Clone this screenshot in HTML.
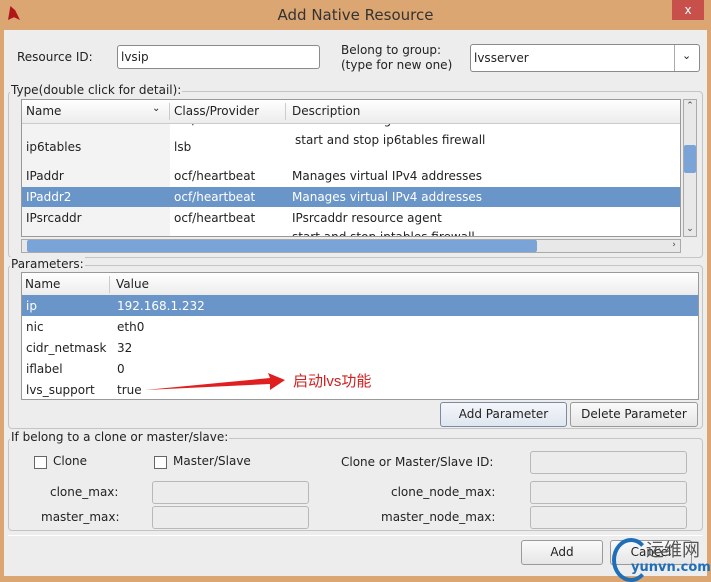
<!DOCTYPE html><html><head><style>
body{margin:0;width:711px;height:582px;background:#dca672;position:relative;overflow:hidden;font-family:"DejaVu Sans","Liberation Sans",sans-serif;font-size:12px;color:#222}
.a{position:absolute}
.body{left:4px;top:30px;width:703px;height:546px;background:#ededed}
.in{position:absolute;background:#fff;border:1px solid #8a8a8a;border-radius:3px;box-sizing:border-box}
.dis{position:absolute;background:#ececec;border:1px solid #b8b8b8;border-radius:3px;box-sizing:border-box}
.grp{position:absolute;border:1px solid #c4c4c4;border-radius:4px;box-sizing:border-box}
.gl{position:absolute;background:#ededed;padding:0 1px}
.btn{position:absolute;border:1px solid #9a9a9a;border-radius:3px;box-sizing:border-box;background:linear-gradient(#fafafa,#e6e6e6);text-align:center}
.sel{background:#6a95c8;color:#fff}
.cb{position:absolute;width:11px;height:11px;border:1px solid #666;background:#fff}
.ar{position:absolute;font-size:9px;color:#444;text-align:center;width:14px}
</style></head><body>
<div class="a" style="left:8px;top:6px;width:12px;height:14px;background:#b01818;clip-path:polygon(20% 0,60% 30%,100% 100%,50% 80%,0 100%)"></div>
<div class="a" style="left:0;top:6px;width:711px;text-align:center;font-size:15px;color:#333">Add Native Resource</div>
<div class="a" style="left:672px;top:0;width:32px;height:20px;background:#c7504a;color:#fff;text-align:center;line-height:20px;font-size:12px">x</div>
<div class="a body"></div>
<div class="a" style="left:17px;top:50px">Resource ID:</div>
<div class="in" style="left:117px;top:45px;width:203px;height:24px;padding:4px 3px">lvsip</div>
<div class="a" style="left:341px;top:43px;line-height:15px">Belong to group:<br>(type for new one)</div>
<div class="in" style="left:470px;top:44px;width:230px;height:28px;padding:6px 3px">lvsserver</div>
<div class="a" style="left:674px;top:45px;width:1px;height:26px;background:#aaa"></div>
<div class="a" style="left:682px;top:49px;font-size:11px">&#8964;</div>
<div class="grp" style="left:8px;top:91px;width:695px;height:167px"></div>
<div class="gl" style="left:10px;top:83px">Type(double click for detail):</div>
<div class="a" style="left:21px;top:99px;width:660px;height:138px;background:#fff;border:1px solid #999;box-sizing:border-box;overflow:hidden">
<div class="a" style="left:0;top:0;width:148px;height:138px;background:#f3f3f3"></div>
<div class="a" style="left:4px;top:13px">ids</div><div class="a" style="left:152px;top:13px">ocf/heartbeat</div><div class="a" style="left:270px;top:13px;white-space:nowrap">OCF resource agent for the IBM's database server called Infor</div>
<div class="a" style="left:270px;top:130px;white-space:nowrap">start and stop iptables firewall</div>
<div class="a" style="left:0;top:0;width:660px;height:23px;background:linear-gradient(#fff,#ececec);border-bottom:1px solid #ccc"></div>
<div class="a" style="left:4px;top:4px">Name</div><div class="a" style="left:130px;top:3px;font-size:10px">&#8964;</div>
<div class="a" style="left:147px;top:3px;width:1px;height:17px;background:#ccc"></div>
<div class="a" style="left:152px;top:4px">Class/Provider</div>
<div class="a" style="left:263px;top:3px;width:1px;height:17px;background:#ccc"></div>
<div class="a" style="left:270px;top:4px">Description</div>
<div class="a" style="left:0;top:23px;width:660px;height:7px;background:transparent"></div>
<div class="a" style="left:4px;top:40px">ip6tables</div><div class="a" style="left:152px;top:40px">lsb</div><div class="a" style="left:273px;top:33px">start and stop ip6tables firewall</div>
<div class="a" style="left:4px;top:69px">IPaddr</div><div class="a" style="left:152px;top:69px">ocf/heartbeat</div><div class="a" style="left:270px;top:69px">Manages virtual IPv4 addresses</div>
<div class="a sel" style="left:0;top:87px;width:660px;height:20px"></div>
<div class="a" style="left:4px;top:90px;color:#fff">IPaddr2</div><div class="a" style="left:152px;top:90px;color:#fff">ocf/heartbeat</div><div class="a" style="left:270px;top:90px;color:#fff">Manages virtual IPv4 addresses</div>
<div class="a" style="left:4px;top:111px">IPsrcaddr</div><div class="a" style="left:152px;top:111px">ocf/heartbeat</div><div class="a" style="left:270px;top:111px">IPsrcaddr resource agent</div>
</div>
<div class="a" style="left:683px;top:99px;width:14px;height:138px;background:#e8e8e8;border:1px solid #aaa;box-sizing:border-box"></div>
<div class="ar" style="left:683px;top:101px">&#8963;</div><div class="ar" style="left:683px;top:224px">&#8964;</div>
<div class="a" style="left:684px;top:145px;width:12px;height:28px;background:#7aa4d8;border-radius:2px"></div>
<div class="a" style="left:21px;top:239px;width:660px;height:14px;background:#e8e8e8;border:1px solid #aaa;box-sizing:border-box"></div>
<div class="a" style="left:27px;top:240px;width:510px;height:12px;background:#7aa4d8;border-radius:2px"></div>
<div class="ar" style="left:667px;top:240px">&#8250;</div>
<div class="grp" style="left:8px;top:265px;width:695px;height:164px"></div>
<div class="gl" style="left:10px;top:257px">Parameters:</div>
<div class="a" style="left:21px;top:272px;width:678px;height:128px;background:#fff;border:1px solid #999;box-sizing:border-box;overflow:hidden">
<div class="a" style="left:0;top:0;width:678px;height:22px;background:linear-gradient(#fff,#ececec);border-bottom:1px solid #ccc"></div>
<div class="a" style="left:3px;top:4px">Name</div><div class="a" style="left:87px;top:3px;width:1px;height:17px;background:#ccc"></div><div class="a" style="left:94px;top:4px">Value</div>
<div class="a sel" style="left:0;top:22px;width:678px;height:21px"></div>
<div class="a" style="left:4px;top:26px;color:#fff">ip</div><div class="a" style="left:95px;top:26px;color:#fff">192.168.1.232</div>
<div class="a" style="left:4px;top:47px">nic</div><div class="a" style="left:95px;top:47px">eth0</div>
<div class="a" style="left:4px;top:68px">cidr_netmask</div><div class="a" style="left:95px;top:68px">32</div>
<div class="a" style="left:4px;top:89px">iflabel</div><div class="a" style="left:95px;top:89px">0</div>
<div class="a" style="left:4px;top:110px">lvs_support</div><div class="a" style="left:95px;top:110px">true</div>
</div>
<svg class="a" style="left:145px;top:370px" width="145" height="24"><polygon points="0,20 125,8 123,3 140,10 125,20 125,14" fill="#e02020"/></svg>
<div class="a" style="left:293px;top:370px;color:#d02020;font-family:'Liberation Sans','Noto Sans CJK SC',sans-serif;font-size:15px">启动lvs功能</div>
<div class="btn" style="left:440px;top:402px;width:127px;height:25px;line-height:23px;border-color:#7a8aa0;background:linear-gradient(#f4f7fb,#dfe6ef)">Add Parameter</div>
<div class="btn" style="left:570px;top:402px;width:128px;height:25px;line-height:23px">Delete Parameter</div>
<div class="grp" style="left:8px;top:438px;width:695px;height:93px"></div>
<div class="gl" style="left:10px;top:430px">If belong to a clone or master/slave:</div>
<div class="cb" style="left:34px;top:456px"></div><div class="a" style="left:53px;top:454px">Clone</div>
<div class="cb" style="left:154px;top:456px"></div><div class="a" style="left:173px;top:454px">Master/Slave</div>
<div class="a" style="left:341px;top:455px">Clone or Master/Slave ID:</div>
<div class="dis" style="left:530px;top:451px;width:157px;height:23px"></div>
<div class="a" style="left:50px;top:485px">clone_max:</div>
<div class="dis" style="left:152px;top:481px;width:157px;height:23px"></div>
<div class="a" style="left:41px;top:510px">master_max:</div>
<div class="dis" style="left:152px;top:506px;width:157px;height:23px"></div>
<div class="a" style="left:391px;top:485px">clone_node_max:</div>
<div class="dis" style="left:530px;top:481px;width:157px;height:23px"></div>
<div class="a" style="left:381px;top:510px">master_node_max:</div>
<div class="dis" style="left:530px;top:506px;width:157px;height:23px"></div>
<div class="a" style="left:8px;top:535px;width:695px;height:1px;background:#fff"></div>
<div class="btn" style="left:521px;top:540px;width:82px;height:25px;line-height:23px">Add</div>
<div class="btn" style="left:610px;top:540px;width:82px;height:25px;line-height:23px">Cancel</div>
<div class="a" style="left:612px;top:538px;width:30px;height:36px;border:4px solid #1e6fb8;border-right-color:transparent;border-radius:50%"></div>
<div class="a" style="left:646px;top:536px;font-size:18px;color:#555;font-family:'Liberation Sans','Noto Sans CJK SC',sans-serif">运维网</div>
<div class="a" style="left:631px;top:560px;font-size:13px;font-weight:bold;color:#1e6fb8">yunvn.com</div>
</body></html>
